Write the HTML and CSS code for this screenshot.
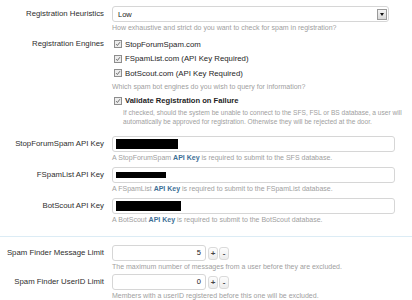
FILE: index.html
```html
<!DOCTYPE html>
<html lang="en">
<head>
    <meta charset="UTF-8">
    <title>Spam Options</title>
    <link rel="stylesheet" href="styles.css">
</head>
<body>

<div class="options">
    <div class="opt opt-first">
        <label class="opt-label">Registration Heuristics</label>
        <div class="opt-ctrl">
            <div class="select">
                <span>Low</span>
                <span class="select-btn"><span class="tri"></span></span>
            </div>
            <p class="hint">How exhaustive and strict do you want to check for spam in registration?</p>
        </div>
    </div>

    <div class="opt opt-engines">
        <label class="opt-label">Registration Engines</label>
        <div class="opt-ctrl">
            <ul class="checks">
                <li><span class="cb"><svg viewBox="0 0 8 8"><path d="M1.5 4.2 L3.2 6 L6.6 1.6" /></svg></span>StopForumSpam.com</li>
                <li><span class="cb"><svg viewBox="0 0 8 8"><path d="M1.5 4.2 L3.2 6 L6.6 1.6" /></svg></span>FSpamList.com (API Key Required)</li>
                <li><span class="cb"><svg viewBox="0 0 8 8"><path d="M1.5 4.2 L3.2 6 L6.6 1.6" /></svg></span>BotScout.com (API Key Required)</li>
            </ul>
            <p class="hint hint-engines">Which spam bot engines do you wish to query for information?</p>
            <div class="validate"><span class="cb"><svg viewBox="0 0 8 8"><path d="M1.5 4.2 L3.2 6 L6.6 1.6" /></svg></span><b>Validate Registration on Failure</b></div>
            <p class="explain">If checked, should the system be unable to connect to the SFS, FSL or BS database, a user will<br>automatically be approved for registration. Otherwise they will be rejected at the door.</p>
        </div>
    </div>

    <div class="opt opt-key">
        <label class="opt-label">StopForumSpam API Key</label>
        <div class="opt-ctrl">
            <div class="textbox"><span class="redact redact-sfs"></span></div>
            <p class="hint">A StopForumSpam <a href="#">API Key</a> is required to submit to the SFS database.</p>
        </div>
    </div>

    <div class="opt opt-key">
        <label class="opt-label">FSpamList API Key</label>
        <div class="opt-ctrl">
            <div class="textbox"><span class="redact redact-fsl"></span></div>
            <p class="hint">A FSpamList <a href="#">API Key</a> is required to submit to the FSpamList database.</p>
        </div>
    </div>

    <div class="opt opt-key">
        <label class="opt-label">BotScout API Key</label>
        <div class="opt-ctrl">
            <div class="textbox"><span class="redact redact-bs"></span></div>
            <p class="hint">A BotScout <a href="#">API Key</a> is required to submit to the BotScout database.</p>
        </div>
    </div>

    <hr class="sep">

    <div class="opt opt-num">
        <label class="opt-label">Spam Finder Message Limit</label>
        <div class="opt-ctrl">
            <div class="spin">
                <div class="numbox">5</div>
                <span class="spin-btn">+</span>
                <span class="spin-btn">-</span>
            </div>
            <p class="hint">The maximum number of messages from a user before they are excluded.</p>
        </div>
    </div>

    <div class="opt opt-num">
        <label class="opt-label">Spam Finder UserID Limit</label>
        <div class="opt-ctrl">
            <div class="spin">
                <div class="numbox">0</div>
                <span class="spin-btn">+</span>
                <span class="spin-btn">-</span>
            </div>
            <p class="hint">Members with a userID registered before this one will be excluded.</p>
        </div>
    </div>
</div>

</body>
</html>
```

FILE: styles.css
```css
body {
    margin: 0;
    background-color: #fff;
    font-family: 'Liberation Sans', Arial, sans-serif;
    color: #333;
    overflow: hidden;
}
.options {
    padding-top: 6px;
}
.opt {
    display: grid;
    grid-template-columns: 104px 1fr;
    column-gap: 8px;
    align-items: start;
}
.opt-label {
    text-align: right;
    white-space: nowrap;
    font-size: 7.8px;
    line-height: 16px;
    color: #2e2e2e;
}
.opt-engines .opt-label {
    margin-top: 4px;
    line-height: 14.5px;
}
.opt-ctrl {
    min-width: 0;
}
.hint {
    margin: 1px 0 0;
    font-size: 7px;
    line-height: 10px;
    color: #a0a0a0;
    white-space: nowrap;
}
.hint a {
    color: #3e6f96;
    font-weight: bold;
    text-decoration: none;
}
.select {
    display: flex;
    align-items: center;
    justify-content: space-between;
    width: 277px;
    height: 16px;
    box-sizing: border-box;
    border: 1px solid #d6d6d6;
    border-radius: 3px;
    padding: 0 1px 0 5px;
    font-size: 7.5px;
    color: #222;
}
.select-btn {
    display: flex;
    align-items: center;
    justify-content: center;
    width: 10px;
    height: 11px;
    box-sizing: border-box;
    border: 1px solid #9a9a9a;
    background: linear-gradient(#f4f4f4, #d8d8d8);
}
.tri {
    width: 0;
    height: 0;
    border-left: 2.5px solid transparent;
    border-right: 2.5px solid transparent;
    border-top: 3px solid #111;
}
.checks {
    list-style: none;
    margin: 4px 0 0;
    padding: 0;
}
.checks li, .validate {
    display: flex;
    align-items: center;
    height: 14.5px;
    font-size: 7.8px;
    color: #1e1e1e;
}
.cb {
    display: inline-block;
    width: 6px;
    height: 6px;
    margin: 0 3px 0 2px;
    border: 1px solid #8d8d8d;
    background: #ececec;
}
.cb svg {
    display: block;
    width: 6px;
    height: 6px;
    fill: none;
    stroke: #555;
    stroke-width: 1.1;
}
.hint-engines {
    margin-top: 1px;
    margin-bottom: 2px;
}
.validate b {
    font-weight: bold;
    font-size: 7.6px;
}
.explain {
    margin: 0 0 0 11px;
    font-size: 6.6px;
    line-height: 9px;
    color: #a0a0a0;
    white-space: nowrap;
}
.opt-key {
    margin-top: 10px;
}
.opt-key + .opt-key {
    margin-top: 4px;
}
.textbox, .numbox {
    height: 16px;
    box-sizing: border-box;
    border: 1px solid #d6d6d6;
    border-radius: 3px;
}
.textbox {
    width: 283px;
    display: flex;
    align-items: center;
    padding-left: 3px;
}
.redact {
    display: block;
    background: #000;
}
.redact-sfs {
    width: 62px;
    height: 10px;
}
.redact-fsl {
    width: 50px;
    height: 6px;
}
.redact-bs {
    width: 65px;
    height: 10px;
}
.sep {
    margin: 11px 0 8px;
    border: 0;
    border-top: 1px solid #dcecf5;
}
.opt-num + .opt-num {
    margin-top: 2px;
}
.spin {
    display: flex;
    align-items: center;
    gap: 1px;
}
.numbox {
    width: 94px;
    text-align: right;
    padding-right: 4px;
    font-size: 7.5px;
    line-height: 14px;
    color: #222;
    margin-right: 1px;
}
.spin-btn {
    width: 10px;
    height: 13px;
    box-sizing: border-box;
    border: 1px solid #dadada;
    border-radius: 3px;
    background: linear-gradient(#fdfdfd, #ececec);
    font-size: 8px;
    line-height: 11px;
    text-align: center;
    font-weight: bold;
    color: #444;
}
```
